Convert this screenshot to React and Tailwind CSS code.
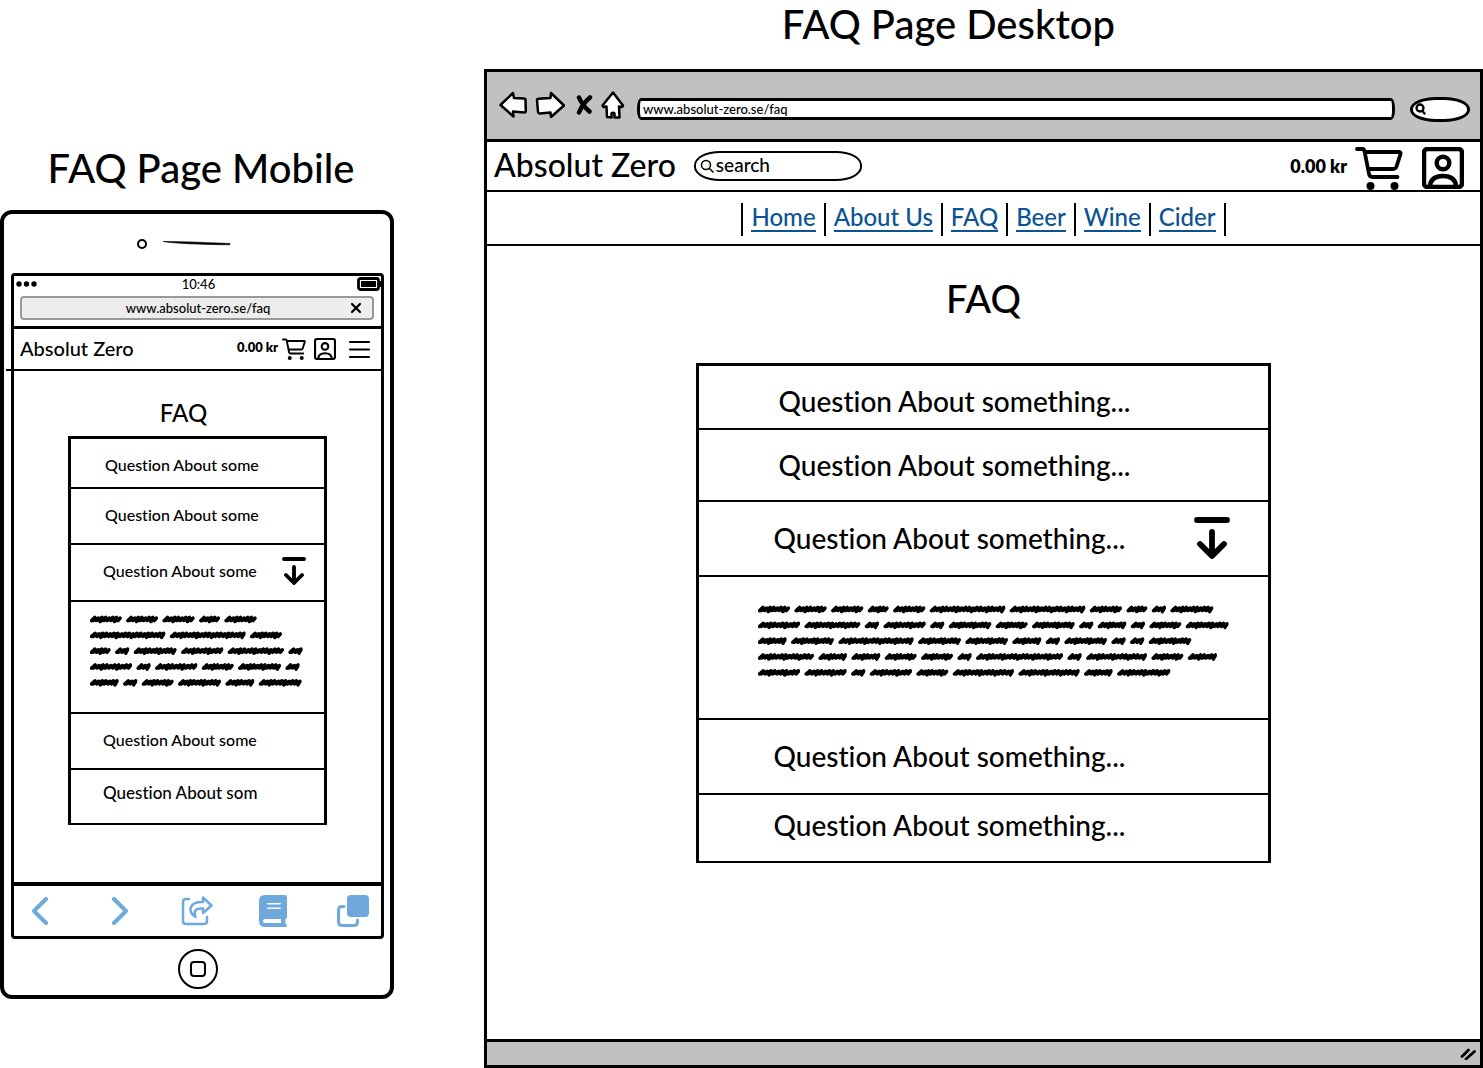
import React from "react";

const desktopScribble = [
  [95, 95, 95, 61, 95, 225, 225, 95, 61, 41, 127],
  [125, 166, 41, 125, 41, 126, 94, 126, 41, 84, 41, 94, 127],
  [85, 127, 224, 127, 126, 85, 41, 126, 41, 41, 126],
  [167, 84, 85, 94, 94, 41, 259, 41, 181, 94, 86],
  [125, 125, 41, 125, 94, 182, 182, 84, 158],
];

const mobileScribble = [
  [94, 94, 95, 61, 95],
  [225, 226, 94],
  [61, 41, 127, 125, 167, 41],
  [125, 41, 125, 94, 127, 41],
  [85, 41, 94, 127, 85, 127],
];

function wordPath(x, y, width) {
  const steps = Math.max(3, Math.round(width / 12));
  const left = x + 4;
  const dx = (width - 8) / steps;
  let d = `M${left} ${y + 4}`;
  for (let i = 0; i < steps; i++) {
    const sx = left + i * dx;
    const up = i % 3 === 1 ? -4 : -6;
    const down = i % 4 === 2 ? 7 : 4;
    d += ` L${sx + dx} ${y + up} L${sx + dx - 6} ${y + down}`;
  }
  return d + ` L${x + width - 4} ${y - 3}`;
}

function Scribble({ lines, width, label }) {
  return (
    <svg
      role="img"
      aria-label={label}
      className="block"
      width={width / 3}
      height="80"
      viewBox={`0 0 ${width} 240`}
      fill="none"
      stroke="black"
      strokeWidth="10"
      strokeLinecap="round"
      strokeLinejoin="round"
    >
      {lines.map((words, row) => {
        let x = 0;
        return words.map((w, i) => {
          const d = wordPath(x, 22 + row * 47.5, w);
          x += w + 15;
          return <path key={`${row}-${i}`} d={d} />;
        });
      })}
    </svg>
  );
}

function Cart({ className, stroke }) {
  return (
    <svg className={className} viewBox="0 0 48 44" fill="none" stroke="black" strokeWidth={stroke} strokeLinecap="round" strokeLinejoin="round" aria-hidden="true">
      <path d="M2 3h5.500q1.500 0 2 2l4.500 23q.6 3 3.500 3h25M9.500 6h35q1.500 0 1 2l-4 12.500q-.8 2.500-3.500 2.500H13" />
      <circle cx="15.500" cy="40" r="4" fill="black" stroke="none" />
      <circle cx="39.500" cy="40" r="4" fill="black" stroke="none" />
    </svg>
  );
}

function Account({ className, stroke }) {
  return (
    <svg className={className} viewBox="0 0 42 42" fill="none" stroke="black" strokeWidth={stroke} strokeLinejoin="round" aria-hidden="true">
      <rect x="2" y="2" width="38" height="38" rx="3.500" />
      <circle cx="21" cy="16" r="6.300" />
      <path d="M8 39q1-10 13-10t13 10" />
    </svg>
  );
}

function DropArrow({ className }) {
  return (
    <svg className={className} viewBox="0 0 36 42" fill="none" stroke="black" strokeWidth="5.800" strokeLinecap="round" strokeLinejoin="round" aria-hidden="true">
      <path d="M3 3h30M18 15v23M6 27l12 12 12-12" />
    </svg>
  );
}

function PhoneRow({ label, className, arrow }) {
  return (
    <button className={`flex w-full items-center justify-between border-b-2 border-black pr-[18px] text-left leading-6 ${className}`}>
      <span>{label}</span>
      {arrow && <DropArrow className="h-7 w-6" />}
    </button>
  );
}

function Phone() {
  return (
    <section className="w-[394px] shrink-0 pt-[144px]">
      <h2 className="pl-2 text-center text-[40px] leading-[48px]">FAQ Page Mobile</h2>
      <div className="mt-[18px] rounded-xl border-4 border-black pb-[6px] pl-[7px] pr-[6px]">
        <div className="flex h-[59px] items-center pl-[126px]" aria-hidden="true">
          <svg width="96" height="12" viewBox="0 0 96 12">
            <circle cx="5" cy="6" r="4" fill="none" stroke="black" strokeWidth="2" />
            <path d="M26 3.500q10-.5 67 2v1.300q-50-.5-67-3.300z" fill="black" stroke="black" strokeWidth=".6" />
          </svg>
        </div>
        <div className="rounded-sm border-[3px] border-black">
          <div className="grid grid-cols-3 items-center pl-0.5 text-[13px] leading-4">
            <svg width="22" height="6" viewBox="0 0 22 6" aria-hidden="true">
              <circle cx="3" cy="3" r="2.700" />
              <circle cx="10.500" cy="3" r="2.700" />
              <circle cx="18" cy="3" r="2.700" />
            </svg>
            <span className="text-center">10:46</span>
            <svg className="justify-self-end" width="24" height="14" viewBox="0 0 24 14" aria-hidden="true">
              <rect x="1.500" y="1.500" width="20" height="11" rx="2" fill="none" stroke="black" strokeWidth="2.800" />
              <rect x="4" y="4" width="15" height="6" />
              <rect x="22" y="4" width="2" height="6" />
            </svg>
          </div>
          <div className="ml-[6px] mr-[7px] mt-1 flex h-6 items-center rounded border-2 border-[#999] bg-[#ededed] pl-3 pr-[10px]">
            <input aria-label="Address" defaultValue="www.absolut-zero.se/faq" className="w-full min-w-0 bg-transparent pl-3 text-center text-[13px] leading-4 outline-none" />
            <button aria-label="Clear address">
              <svg width="12" height="12" viewBox="0 0 12 12" stroke="black" strokeWidth="2.200" strokeLinecap="round">
                <path d="M2 2l8 8M10 2l-8 8" />
              </svg>
            </button>
          </div>
          <header className="-ml-2 mt-[6px] border-b-2 border-black pl-2">
            <div className="flex h-[43px] items-center border-t-[3px] border-black pl-[6px] pr-[10px]">
              <span className="pb-0.5 text-[20px] leading-6">Absolut Zero</span>
              <span className="ml-auto pb-1 text-[13px] font-extrabold leading-4">0.00 kr</span>
              <button aria-label="Cart" className="ml-1"><Cart className="h-[22px] w-6" stroke="3.800" /></button>
              <button aria-label="Account" className="ml-2"><Account className="h-[22px] w-[22px]" stroke="4" /></button>
              <button aria-label="Menu" className="ml-3">
                <svg width="23" height="19" viewBox="0 0 23 19" stroke="black" strokeWidth="2.200" strokeLinecap="round">
                  <path d="M2 2h19M2 9.500h19M2 17h19" />
                </svg>
              </button>
            </div>
          </header>
          <main className="px-[54px] pb-[57px] pt-[26px]">
            <h3 className="pr-7 text-center text-[24px] leading-8">FAQ</h3>
            <div className="mt-[7px] border-[3px] border-b-0 border-black">
              <PhoneRow label="Question About some" className="pb-[10px] pl-[34px] pt-[14px] text-[16px]" />
              <PhoneRow label="Question About some" className="pb-[16px] pl-[34px] pt-[14px] text-[16px]" />
              <PhoneRow label="Question About some" className="h-[57px] pb-[3px] pl-8 text-[16px]" arrow />
              <div className="border-b-2 border-black pb-5 pl-[19px] pt-[10px]">
                <Scribble lines={mobileScribble} width={645} label="Answer text" />
              </div>
              <PhoneRow label="Question About some" className="pb-[16px] pl-8 pt-[14px] text-[16px]" />
              <PhoneRow label="Question About som" className="pb-[18px] pl-8 pt-[11px] text-[17px]" />
            </div>
          </main>
          <nav aria-label="Browser" className="flex h-[54px] items-center justify-between border-t-4 border-black pl-[18px] pr-3 text-[#6fa8dc]">
            <button aria-label="Back" className="w-7">
              <svg width="16" height="28" viewBox="0 0 16 28" fill="none" stroke="currentColor" strokeWidth="4" strokeLinecap="round" strokeLinejoin="round"><path d="M14 2L2 14l12 12" /></svg>
            </button>
            <button aria-label="Forward" className="flex w-9 justify-center">
              <svg width="16" height="28" viewBox="0 0 16 28" fill="none" stroke="currentColor" strokeWidth="4" strokeLinecap="round" strokeLinejoin="round"><path d="M2 2l12 12L2 26" /></svg>
            </button>
            <button aria-label="Share" className="w-9">
              <svg width="32" height="30" viewBox="0 0 32 30" fill="none" stroke="currentColor" strokeWidth="2.500" strokeLinecap="round" strokeLinejoin="round">
                <path d="M8 3H5Q2 3 2 6v19q0 3 3 3h18q3 0 3-3v-4M22 1.500l8.500 8L22 17v-4.500c-8-.5-9.500 2.500-7.500 8.500C6 15 8.500 5.500 22 6z" />
              </svg>
            </button>
            <button aria-label="Bookmarks" className="w-9">
              <svg width="28" height="32" viewBox="0 0 28 32" fill="currentColor">
                <path fillRule="evenodd" d="M6 0h20q2 0 2 2v20q0 1.500-1.500 2v5q1.500.5 1.500 1.500 0 1.500-1.500 1.500H6q-6 0-6-6V6Q0 0 6 0zm3 8q-1 0-1 .8t1 .8h12q1 0 1-.8T21 8zm0 4.500q-1 0-1 .8t1 .8h12q1 0 1-.8t-1-.8zM6 24q-2 0-2 2t2 2h16v-4z" />
              </svg>
            </button>
            <button aria-label="Tabs" className="w-8">
              <svg width="32" height="32" viewBox="0 0 32 32" fill="none" stroke="currentColor" strokeWidth="3" strokeLinecap="round">
                <rect x="10" width="22" height="22" rx="4" fill="currentColor" stroke="none" />
                <path d="M7 11.500H5q-3.500 0-3.500 3.500v12q0 3.500 3.500 3.500h12q3.500 0 3.500-3.500v-2" />
              </svg>
            </button>
          </nav>
        </div>
        <button aria-label="Home button" className="mx-auto mt-[10px] flex size-10 items-center justify-center rounded-full border-2 border-black">
          <span className="size-4 rounded border-2 border-black" />
        </button>
      </div>
    </section>
  );
}

function DesktopRow({ label, className, arrow }) {
  return (
    <button className={`flex w-full items-center justify-between border-b-2 border-black pr-[38px] text-left text-[28px] leading-8 ${className}`}>
      <span>{label}</span>
      {arrow && <DropArrow className="h-[42px] w-9" />}
    </button>
  );
}

const links = ["Home", "About Us", "FAQ", "Beer", "Wine", "Cider"];

function Browser() {
  return (
    <section className="flex min-w-0 flex-1 flex-col">
      <h2 className="pr-[70px] text-center text-[40px] leading-[48px]">FAQ Page Desktop</h2>
      <div className="mt-[21px] flex flex-1 flex-col border-[3px] border-black">
        <div className="flex h-[70px] items-center border-b-[3px] border-black bg-[#c1c1c1] pb-px pl-3 pr-[10px]">
          <button aria-label="Back">
            <svg width="28" height="28" viewBox="0 0 28 28" fill="white" stroke="black" strokeWidth="2.500" strokeLinejoin="round"><path d="M14 2l1 5 10 .5q1.500 0 1.500 1.500l.3 11q0 1.500-1.500 1.500L14 20.500 14.500 25.500 1.500 14z" /></svg>
          </button>
          <button aria-label="Forward" className="ml-2">
            <svg width="30" height="28" viewBox="0 0 30 28" fill="white" stroke="black" strokeWidth="2.500" strokeLinejoin="round"><path d="M16 2L29 14.500 16 26l-.5-4.500-11 1Q3 22 3 21L2 9q0-1 1.500-1.200L15.500 7z" /></svg>
          </button>
          <button aria-label="Stop" className="ml-[11px]">
            <svg width="17" height="20" viewBox="0 0 17 20" stroke="black" strokeWidth="4.500" strokeLinecap="round"><path d="M3 2.500Q6 10 13.500 16.500M14 2.500Q7 8 3 17.500" fill="none" /></svg>
          </button>
          <button aria-label="Home" className="ml-2">
            <svg width="24" height="28" viewBox="0 0 24 28" fill="white" stroke="black" strokeWidth="2.500" strokeLinejoin="round"><path d="M12 1.500l10 13-1 1.500-3-.5.500 11h-5v-4q-1.500-1.500-3 0v4L6 26l-.5-10.500-3 .5-1-1.500z" /></svg>
          </button>
          <input aria-label="Address" defaultValue="www.absolut-zero.se/faq" className="ml-3 mt-2 h-[22px] min-w-0 flex-1 rounded-[4px/10px] border-[3px] border-black bg-white px-[3px] pb-px text-[13px] leading-4 outline-none" />
          <label className="ml-[15px] mt-2 flex h-[25px] w-[60px] items-center rounded-[26px/12px] border-[3px] border-black bg-white pl-0.5">
            <svg className="shrink-0" width="11" height="12" viewBox="0 0 11 12" fill="none" stroke="black" strokeWidth="2.300" strokeLinecap="round" aria-hidden="true"><circle cx="5" cy="5" r="3.500" /><path d="M7.500 8l2 2.500" /></svg>
            <input aria-label="Browser search" className="w-full min-w-0 bg-transparent text-[13px] outline-none" />
          </label>
        </div>
        <header className="flex h-[50px] items-center border-b-2 border-black pl-[7px] pr-4">
          <span className="pb-0.5 text-[32px] leading-10">Absolut Zero</span>
          <label className="ml-[18px] flex h-[30px] w-[168px] items-center rounded-[26px/14px] border-2 border-black pl-1">
            <svg className="shrink-0" width="14" height="14" viewBox="0 0 14 14" fill="none" stroke="black" strokeWidth="1.500" strokeLinecap="round" aria-hidden="true"><circle cx="6" cy="6" r="4.500" /><path d="M9.500 9.500L13 13" /></svg>
            <input aria-label="Search" placeholder="search" className="w-full min-w-0 bg-transparent pb-[3px] pl-0.5 text-[19px] leading-6 outline-none placeholder:text-black" />
          </label>
          <span className="ml-auto text-[18px] font-extrabold leading-6">0.00 kr</span>
          <button aria-label="Cart" className="ml-2 mr-px pt-1"><Cart className="h-11 w-12" stroke="3.800" /></button>
          <button aria-label="Account" className="ml-[18px] pt-1"><Account className="h-[42px] w-[42px]" stroke="4.500" /></button>
        </header>
        <nav aria-label="Main" className="flex h-[54px] items-center justify-center border-b-2 border-black pt-0.5 text-[24px] leading-[26px] text-[#0b5394]">
          <ul className="flex divide-x-2 divide-black border-x-2 border-black">
            {links.map((l) => (
              <li key={l} className="px-2 pb-1 pt-px">
                <a href="#faq" className="block border-b-2 border-[#0b5394]">{l}</a>
              </li>
            ))}
          </ul>
        </nav>
        <main className="flex-1 pb-[176px] pt-[28px]">
          <h1 className="text-center text-[38px] leading-[48px]">FAQ</h1>
          <div className="mx-auto mt-[41px] w-[58%] border-[3px] border-b-0 border-black">
            <DesktopRow label="Question About something..." className="pb-[11px] pl-[80px] pt-[19px]" />
            <DesktopRow label="Question About something..." className="pb-[19px] pl-[80px] pt-[19px]" />
            <DesktopRow label="Question About something..." className="h-[75px] pb-px pl-[75px]" arrow />
            <div className="border-b-2 border-black pb-9 pl-[59px] pt-[25px]">
              <Scribble lines={desktopScribble} width={1425} label="Answer text" />
            </div>
            <DesktopRow label="Question About something..." className="pb-[21px] pl-[75px] pt-5" />
            <DesktopRow label="Question About something..." className="pb-5 pl-[75px] pt-[14px]" />
          </div>
        </main>
        <footer className="flex h-[26px] items-center justify-end border-t-[3px] border-black bg-[#c1c1c1] pr-1">
          <svg width="16" height="12" viewBox="0 0 16 12" stroke="black" strokeWidth="2.800" strokeLinecap="round" aria-hidden="true"><path d="M2 8.500L8.500 2M6 11l8.500-7.500" /></svg>
        </footer>
      </div>
    </section>
  );
}

export default function App() {
  return (
    <div className="flex min-h-screen items-start gap-[90px] bg-white font-['Lato',sans-serif] font-medium text-black [font-variant-ligatures:none]">
      <Phone />
      <Browser />
    </div>
  );
}
